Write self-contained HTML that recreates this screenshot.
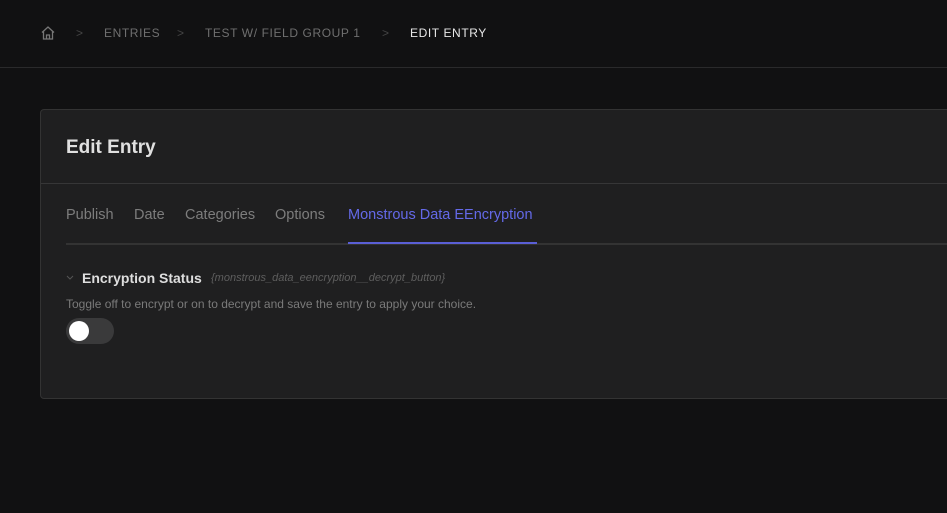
<!DOCTYPE html>
<html><head><style>
*{margin:0;padding:0;box-sizing:border-box}
body{width:947px;height:513px;background:#111112;font-family:"Liberation Sans",sans-serif;position:relative;overflow:hidden}
.top{position:absolute;left:0;top:0;width:947px;height:68px;border-bottom:1px solid #2a2a2b}
.bc{position:absolute;top:26px;font-size:12px;letter-spacing:0.6px;color:#6f6f6f;white-space:nowrap}
.card{position:absolute;left:40px;top:109px;width:920px;height:290px;background:#1f1f20;border:1px solid #333;border-radius:4px}
.hd{height:74px;border-bottom:1px solid #363637;padding:27px 0 0 25px;font-size:19px;font-weight:bold;color:#e0e0e0}
.tabs{position:absolute;left:25px;top:97px;font-size:14.5px;color:#7d7d7d}
.tabs span{position:absolute;white-space:nowrap}
.line{position:absolute;left:25px;top:133px;width:900px;height:2px;background:#333}
.act{position:absolute;left:307px;top:132px;width:189px;height:2px;background:#5a5fd6}
</style></head><body>
<div class="top">
<svg style="position:absolute;left:40px;top:25px" width="16" height="16" viewBox="0 0 16 16" fill="none" stroke="#777" stroke-width="1.3"><path d="M2 7.5L8 2l6 5.5M3.5 6.5V14h9V6.5M6.5 14V10h3v4"/></svg>
<span class="bc" style="left:76px;color:#444">&gt;</span>
<span class="bc" style="left:104px">ENTRIES</span>
<span class="bc" style="left:177px;color:#444">&gt;</span>
<span class="bc" style="left:205px">TEST W/ FIELD GROUP 1</span>
<span class="bc" style="left:382px;color:#444">&gt;</span>
<span class="bc" style="left:410px;color:#e8e8e8">EDIT ENTRY</span>
</div>
<div class="card">
<div class="hd">Edit Entry</div>
<div class="tabs">
<span style="left:0">Publish</span><span style="left:68px">Date</span><span style="left:119px">Categories</span><span style="left:209px">Options</span><span style="left:282px;color:#6469e8">Monstrous Data EEncryption</span>
</div>
<div class="line"></div><div class="act"></div>
<svg style="position:absolute;left:25px;top:165px" width="8" height="6" viewBox="0 0 8 6" fill="none" stroke="#555" stroke-width="1"><path d="M1 1l3 3 3-3"/></svg>
<span style="position:absolute;left:41px;top:160px;font-size:14px;font-weight:bold;color:#dedede">Encryption Status</span>
<span style="position:absolute;left:170px;top:162px;font-size:11px;font-style:italic;color:#5e5e5e;white-space:nowrap">{monstrous_data_eencryption__decrypt_button}</span>
<span style="position:absolute;left:25px;top:187px;font-size:12px;color:#7a7a7a;white-space:nowrap">Toggle off to encrypt or on to decrypt and save the entry to apply your choice.</span>
<div style="position:absolute;left:25px;top:208px;width:48px;height:26px;border-radius:13px;background:#3a3a3b"></div>
<div style="position:absolute;left:28px;top:211px;width:20px;height:20px;border-radius:50%;background:#fff"></div>
</div>
</body></html>
